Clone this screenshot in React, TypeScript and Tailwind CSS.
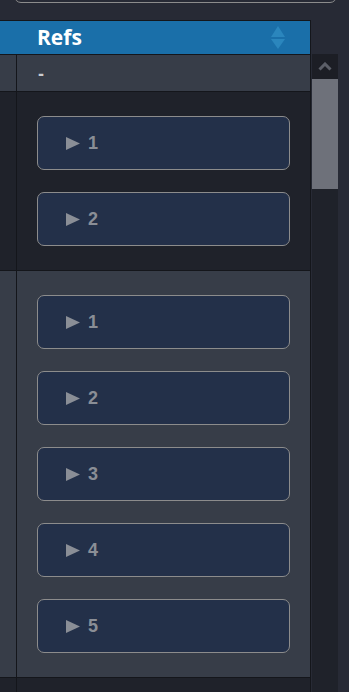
const groups: number[][] = [
    [1, 2],
    [1, 2, 3, 4, 5],
];

const RefButton = ({ label }: { label: number }) => {
    return (
        <div className="flex items-center h-[54px] w-full rounded-[7px] border border-[#8c8c8c] bg-[#233049] pl-[28px] gap-[8px]">
            <svg width="14" height="13" viewBox="0 0 14 13" className="block">
                <polygon points="0,0 14,6.5 0,13" fill="#8a8e96" />
            </svg>
            <span className="text-[18px] font-bold leading-none text-[#8a8e96] [font-family:'Liberation_Sans',Arial,sans-serif]">
                {label}
            </span>
        </div>
    );
};

const App = () => {
    return (
        <div className="w-[349px] h-[692px] overflow-hidden bg-[#272a35] [font-family:'Liberation_Sans',Arial,sans-serif]">
            {/* search box peeking in at the top */}
            <div className="mx-[14px] w-[323px] h-[40px] -mt-[37px] rounded-[7px] border border-[#8c8c8c]" />
            <div className="flex mt-[17px]">
                {/* table */}
                <div className="w-[311px] flex flex-col">
                    <div className="flex items-center h-[35px] bg-[#1a6fa9] border-y border-r border-y-[#14161b] border-r-[#14161b] pl-[37px] pr-[25px]">
                        <span className="flex-1 text-[21px] font-bold text-white leading-none [font-family:'Open_Sans',sans-serif]">
                            Refs
                        </span>
                        <div className="flex flex-col gap-[2px]">
                            <svg width="14" height="11" viewBox="0 0 14 11">
                                <polygon points="7,0 14,11 0,11" fill="#2b86bd" />
                            </svg>
                            <svg width="14" height="10" viewBox="0 0 14 10">
                                <polygon points="0,0 14,0 7,10" fill="#2b86bd" />
                            </svg>
                        </div>
                    </div>
                    <div className="flex h-[37px] bg-[#373d48] border-b border-r border-[#14161b]">
                        <div className="w-[17px] border-r border-[#14161b]" />
                        <div className="flex items-center pl-[21px] pt-[3px] text-[18px] font-bold text-[#c9cbcf]">-</div>
                    </div>
                    {groups.map((group, gi) => (
                        <div
                            key={gi}
                            className={`flex border-b border-r border-[#14161b] ${
                                gi === 0 ? "bg-[#1f222a]" : "bg-[#373d48]"
                            }`}
                        >
                            <div className="w-[17px] shrink-0 border-r border-[#14161b]" />
                            <div className="flex-1 flex flex-col gap-[22px] py-[24px] pl-[20px] pr-[20px]">
                                {group.map((n) => (
                                    <RefButton key={n} label={n} />
                                ))}
                            </div>
                        </div>
                    ))}
                    <div className="h-[30px] bg-[#1f222a] border-r border-[#14161b]">
                        <div className="w-[17px] h-full border-r border-[#14161b]" />
                    </div>
                </div>
                {/* scrollbar */}
                <div className="ml-[1px] w-[26px] flex flex-col">
                    <div className="h-[34px]" />
                    <div className="flex-1 bg-[#1f222a] flex flex-col">
                        <div className="h-[25px] bg-[#1c1e25] flex items-center justify-center">
                            <svg width="14" height="9" viewBox="0 0 14 9">
                                <polyline points="1.5,7.5 7,2 12.5,7.5" fill="none" stroke="#5c5f68" strokeWidth="3" />
                            </svg>
                        </div>
                        <div className="h-[110px] bg-[#6e717a]" />
                    </div>
                </div>
            </div>
        </div>
    );
};

export default App;
